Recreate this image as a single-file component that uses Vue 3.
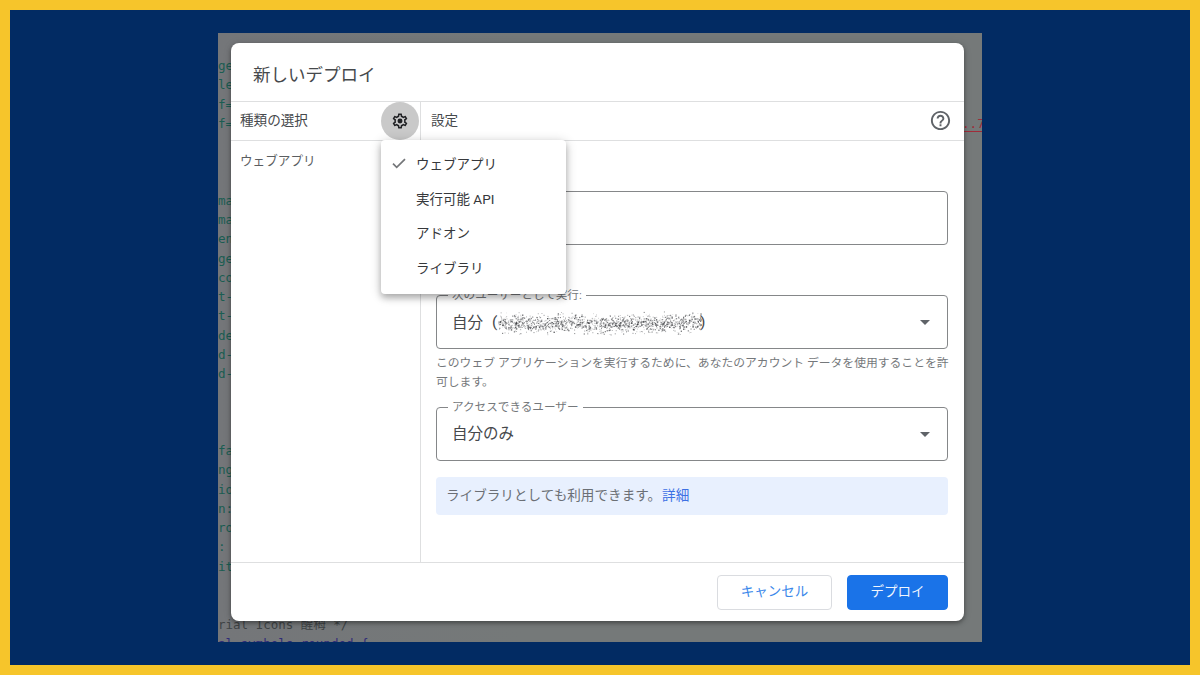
<script setup>
const codeLines = [
  'ge', 'le', 'f=', 'f=', '', '', '', 'ma', 'ma', 'en', 'ge', 'co', 't-', 't-', 'de', 'd-', 'd-',
  '', '', '', 'fa', 'ng', 'io', 'n:', 'ro', ':', 'it', '', '',
]

const menuItems = ['ウェブアプリ', '実行可能 API', 'アドオン', 'ライブラリ']

// Deterministic speckles that mask the account address.
let seed = 7
const rand = () => {
  seed = (seed * 16807) % 2147483647
  return seed / 2147483647
}
const specks = Array.from({ length: 1350 }, () => {
  const x = rand() * 203
  const spread = (rand() + rand() + rand()) / 3 - 0.5
  const lift = x < 25 || x > 165 ? -1 : 0.6
  return {
    x: (x + 0.5).toFixed(1),
    y: (12 + lift + Math.sin(x / 13) * 0.8 + spread * 25).toFixed(1),
    s: (0.6 + rand() * 0.8).toFixed(1),
    o: (0.2 + rand() * 0.55).toFixed(2),
  }
})
</script>

<template>
  <main class="frame">
    <section class="editor">
      <pre class="code"><div v-for="(line, i) in codeLines" :key="i" class="line">{{ line }}</div><div class="line comment">rial Icons 醒栂 */</div><div class="line selector">al-symbols-rounded {</div></pre>
      <span class="url">..7</span>

      <div class="dialog">
        <header class="title">新しいデプロイ</header>
        <div class="bar">
          <div class="bar-left">
            <span class="heading">種類の選択</span>
            <button class="gear">
              <svg width="18" height="18" viewBox="0 0 24 24">
                <path fill="#202124" d="M19.43 12.98c.04-.32.07-.64.07-.98 0-.34-.03-.66-.07-.98l2.11-1.65c.19-.15.24-.42.12-.64l-2-3.46c-.09-.16-.26-.25-.44-.25-.06 0-.12.01-.17.03l-2.49 1c-.52-.4-1.08-.73-1.69-.98l-.38-2.65C14.46 2.18 14.25 2 14 2h-4c-.25 0-.46.18-.49.42l-.38 2.65c-.61.25-1.17.59-1.69.98l-2.49-1c-.06-.02-.12-.03-.18-.03-.17 0-.34.09-.43.25l-2 3.46c-.13.22-.07.49.12.64l2.11 1.65c-.04.32-.07.65-.07.98 0 .33.03.66.07.98l-2.11 1.65c-.19.15-.24.42-.12.64l2 3.46c.09.16.26.25.44.25.06 0 .12-.01.17-.03l2.49-1c.52.4 1.08.73 1.69.98l.38 2.65c.03.24.24.42.49.42h4c.25 0 .46-.18.49-.42l.38-2.65c.61-.25 1.17-.59 1.69-.98l2.49 1c.06.02.12.03.18.03.17 0 .34-.09.43-.25l2-3.46c.12-.22.07-.49-.12-.64l-2.11-1.65zm-1.98-1.71c.04.31.05.52.05.73 0 .21-.02.43-.05.73l-.14 1.13.89.7 1.08.84-.7 1.21-1.27-.51-1.04-.42-.9.68c-.43.32-.84.56-1.25.73l-1.06.43-.16 1.13-.2 1.35h-1.4l-.19-1.35-.16-1.13-1.06-.43c-.43-.18-.83-.41-1.23-.71l-.91-.7-1.06.43-1.27.51-.7-1.21 1.08-.84.89-.7-.14-1.13c-.03-.31-.05-.54-.05-.74s.02-.43.05-.73l.14-1.13-.89-.7-1.08-.84.7-1.21 1.27.51 1.04.42.9-.68c.43-.32.84-.56 1.25-.73l1.06-.43.16-1.13.2-1.35h1.39l.19 1.35.16 1.13 1.06.43c.43.18.83.41 1.23.71l.91.7 1.06-.43 1.27-.51.7 1.21-1.07.85-.89.7.14 1.13z" />
                <circle cx="12" cy="12" r="3.3" fill="#202124" />
              </svg>
            </button>
          </div>
          <div class="bar-right">
            <span class="heading">設定</span>
            <svg class="help" width="23" height="23" viewBox="0 0 24 24">
              <path fill="#5f6368" d="M11 18h2v-2h-2v2zm1-16C6.48 2 2 6.48 2 12s4.48 10 10 10 10-4.48 10-10S17.52 2 12 2zm0 18c-4.41 0-8-3.59-8-8s3.59-8 8-8 8 3.59 8 8-3.59 8-8 8zm0-14c-2.21 0-4 1.79-4 4h2c0-1.1.9-2 2-2s2 .9 2 2c0 2-3 1.75-3 5h2c0-2.25 3-2.5 3-5 0-2.21-1.79-4-4-4z" />
            </svg>
          </div>
        </div>

        <div class="body">
          <aside class="side">ウェブアプリ</aside>
          <div class="settings">
            <div class="field description"></div>
            <div class="field run-as">
              <span class="label">次のユーザーとして実行:</span>
              <span class="value">自分</span>
              <span class="paren">(</span>
              <svg class="mask" width="204" height="26" viewBox="0 0 204 26">
                <rect v-for="(d, i) in specks" :key="i" :x="d.x" :y="d.y" :width="d.s" :height="d.s" :fill-opacity="d.o" fill="#303236" />
              </svg>
              <span class="paren close">)</span>
              <svg class="arrow" width="10" height="5" viewBox="0 0 10 5"><path d="M0 0h10L5 5z" fill="#5f6368" /></svg>
            </div>
            <p class="hint">このウェブ アプリケーションを実行するために、あなたのアカウント データを使用することを許<br>可します。</p>
            <div class="field access">
              <span class="label">アクセスできるユーザー</span>
              <span class="value">自分のみ</span>
              <svg class="arrow" width="10" height="5" viewBox="0 0 10 5"><path d="M0 0h10L5 5z" fill="#5f6368" /></svg>
            </div>
            <div class="info"><span>ライブラリとしても利用できます。</span><a>詳細</a></div>
          </div>
        </div>

        <footer class="actions">
          <button class="btn cancel">キャンセル</button>
          <button class="btn deploy">デプロイ</button>
        </footer>

        <div class="menu">
          <div v-for="(item, i) in menuItems" :key="item" class="menu-item">
            <span class="tick">
              <svg v-if="i === 0" width="14" height="11" viewBox="0 0 14 11"><path d="M1 5.7L4.7 9.4L13 1.2" fill="none" stroke="#747679" stroke-width="1.7" /></svg>
            </span>
            <span>{{ item }}</span>
          </div>
        </div>
      </div>
    </section>
  </main>
</template>

<style>
body { margin: 0; overflow: hidden; }
</style>

<style scoped>
* { box-sizing: border-box; }
.frame {
  width: 1200px;
  height: 675px;
  border: 10px solid #f6c52b;
  background: #022b63;
  padding: 23px 208px 0 208px;
  font-family: Roboto, "Noto Sans CJK JP", sans-serif;
  color: #46494c;
}
.editor {
  position: relative;
  width: 764px;
  height: 609px;
  background: linear-gradient(90deg, #747679, #757979 40%);
  overflow: hidden;
  padding: 10px 0 0 13px;
}
.code {
  position: absolute;
  left: 0;
  top: 23px;
  margin: 0;
  font: 12.6px/19.25px "DejaVu Sans Mono", "Noto Sans CJK JP", monospace;
  color: #1b5d52;
}
.line { height: 19.25px; white-space: pre; }
.comment { color: #404446; padding-top: 1px; font-size: 12.5px; }
.selector { color: #302c78; font-size: 12.5px; }
.url {
  position: absolute;
  left: 744px;
  top: 80px;
  width: 24px;
  height: 19px;
  border-bottom: 1px solid #a02c3a;
  color: #a02c3a;
  font: 12.6px/21px "DejaVu Sans Mono", monospace;
}
.dialog {
  position: relative;
  width: 733px;
  height: 578px;
  display: flex;
  flex-direction: column;
  background: #fff;
  border-radius: 8px;
  box-shadow: 0 2px 4px rgba(0, 0, 0, .35), 0 1px 8px rgba(0, 0, 0, .12);
}
.title {
  height: 59px;
  border-bottom: 1px solid #dedfe0;
  padding-left: 22px;
  font-size: 17.5px;
  line-height: 65px;
}
.bar { display: flex; height: 39px; border-bottom: 1px solid #dedfe0; font-size: 13.6px; }
.heading { padding-bottom: 4px; }
.bar-left {
  width: 190px;
  flex: none;
  display: flex;
  justify-content: space-between;
  align-items: center;
  padding-left: 9px;
  padding-right: 1px;
  border-right: 1px solid #dedfe0;
}
.gear {
  width: 38px;
  height: 38px;
  padding: 0;
  border: 0;
  border-radius: 50%;
  background: #c9c9c9;
  display: grid;
  place-items: center;
}
.bar-right { flex: 1; display: flex; align-items: center; justify-content: space-between; padding: 0 12px 0 10px; }
.help { margin-bottom: 1px; }
.body { flex: 1; display: flex; min-height: 0; }
.side {
  width: 190px;
  flex: none;
  border-right: 1px solid #dedfe0;
  padding: 10px 0 0 9px;
  font-size: 12.6px;
  line-height: 20px;
  color: #5b5e61;
}
.settings { flex: 1; min-width: 0; padding: 50px 16px 0 15px; }
.field {
  position: relative;
  height: 54px;
  border: 1px solid #858789;
  border-radius: 4px;
  display: flex;
  align-items: center;
  padding: 0 17px 0 15px;
  font-size: 15.5px;
}
.run-as { margin-top: 50px; }
.access { margin-top: 15px; }
.value { padding-bottom: 3px; }
.access .value { padding-bottom: 4px; }
.label {
  position: absolute;
  left: 11px;
  top: -9px;
  padding: 0 4px;
  background: #fff;
  font-size: 11.6px;
  line-height: 16px;
  color: #75787b;
  white-space: nowrap;
}
.paren { width: 5px; line-height: 20px; }
.close { margin-left: -2px; }
.value + .paren { margin-left: 9px; }
.mask { flex: none; margin: 3px 0 0 1px; }
.arrow { margin-left: auto; }
.hint { margin: 5px 0 0; font-size: 11.8px; line-height: 19px; color: #75787b; white-space: nowrap; }
.info {
  margin-top: 16px;
  height: 38px;
  border-radius: 4px;
  background: #e8f0fe;
  padding-left: 10px;
  font-size: 13.6px;
  line-height: 37px;
  color: #6b6f75;
}
.info a { color: #3d70e4; margin-left: 1px; }
.actions {
  height: 59px;
  border-top: 1px solid #dedfe0;
  display: flex;
  justify-content: flex-end;
  gap: 15px;
  padding: 12px 16px 0 0;
}
.btn {
  height: 35px;
  padding: 0 0 2px;
  border: 1px solid #dadce0;
  border-radius: 4px;
  background: #fff;
  font: 13.5px/31px Roboto, "Noto Sans CJK JP", sans-serif;
}
.cancel { width: 115px; color: #3a87ea; }
.deploy { width: 101px; background: #1a73e8; border-color: #1a73e8; color: #f0f6fe; }
.menu {
  position: absolute;
  left: 150px;
  top: 97px;
  width: 185px;
  height: 154px;
  padding-top: 6px;
  background: #fff;
  border-radius: 4px;
  box-shadow: 0 4px 6px rgba(0, 0, 0, .22), 0 2px 12px rgba(0, 0, 0, .2);
  font-size: 13.5px;
  color: #36383b;
}
.menu-item { display: flex; align-items: center; height: 34.6px; padding-left: 11px; }
.tick { width: 24px; display: flex; }
</style>
